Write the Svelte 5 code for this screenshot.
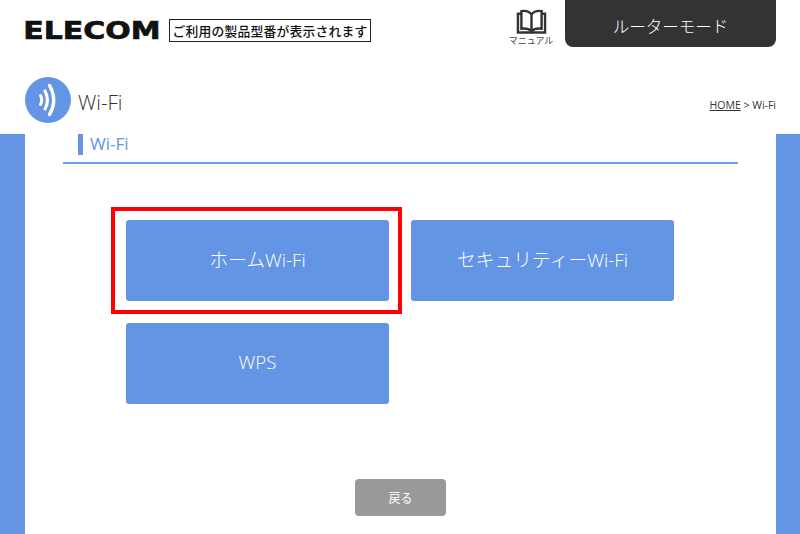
<script lang="ts">
  const menu = ['ホームWi-Fi', 'セキュリティーWi-Fi', 'WPS'];
</script>

<div class="page">
  <header class="top">
    <div class="brand">
      <span class="logo">ELECOM</span>
      <span class="model">ご利用の製品型番が表示されます</span>
    </div>
    <div class="top-right">
      <a class="manual" href="#manual">
        <svg width="31" height="26" viewBox="0 0 31 26" fill="none" stroke="#333" stroke-width="2.5" aria-hidden="true">
          <path d="M15.5 5.5C13 2.5 9 1.5 5 2.2V20.5C9 20 13 20.8 15.5 23C18 20.8 22 20 26 20.5V2.2C22 1.5 18 2.5 15.5 5.5Z" />
          <path d="M15.5 5.5V23" />
          <path d="M5 5H1.4V24.4H29.6V5H26" />
        </svg>
        <span>マニュアル</span>
      </a>
      <div class="mode">ルーターモード</div>
    </div>
  </header>

  <div class="title-row">
    <div class="title">
      <span class="round">
        <svg width="46" height="46" viewBox="0 0 46 46" fill="none" stroke="#fff" stroke-linecap="round" aria-hidden="true">
          <path d="M15.5 18.5C17 21.5 17 25 15.5 27.5" stroke-width="3" />
          <path d="M20 14C23 20 23 27 20 32" stroke-width="3.2" />
          <path d="M24.5 8.5C30 18 30 28 24.5 37.5" stroke-width="3.4" />
        </svg>
      </span>
      <h1>Wi-Fi</h1>
    </div>
    <div class="crumbs"><a href="#home">HOME</a> &gt; Wi-Fi</div>
  </div>

  <main class="body">
    <div class="panel">
      <h2>Wi-Fi</h2>
      <div class="grid">
        {#each menu as label, i}
          <button class="item">
            {label}
            {#if i === 0}<span class="mark"></span>{/if}
          </button>
        {/each}
      </div>
      <button class="back">戻る</button>
    </div>
  </main>
</div>

<style>
  :global(body) {
    margin: 0;
    background: #fff;
  }

  .page {
    width: 800px;
    height: 534px;
    overflow: hidden;
    display: flex;
    flex-direction: column;
    font-family: "Open Sans", "Noto Sans CJK JP", sans-serif;
    color: #333;
  }

  .top {
    height: 47px;
    display: flex;
    justify-content: space-between;
    padding: 0 24px 0 25px;
  }

  .brand {
    display: flex;
    align-items: flex-start;
    padding-top: 19px;
    gap: 9px;
  }

  .logo {
    display: block;
    width: 135px;
    height: 22px;
    font: 700 25.5px/22px "DejaVu Sans", sans-serif;
    color: #111;
    white-space: nowrap;
    text-indent: -1.5px;
    transform: scaleX(1.175);
    transform-origin: left center;
    -webkit-text-stroke: 0.7px #111;
  }

  .model {
    box-sizing: border-box;
    height: 23px;
    width: 202px;
    border: 1px solid #222;
    font: 500 12.8px/21px "Noto Sans CJK JP", sans-serif;
    color: #111;
    text-align: center;
    white-space: nowrap;
    letter-spacing: 0.2px;
  }

  .top-right {
    display: flex;
    gap: 12px;
  }

  .manual {
    width: 44px;
    padding-top: 9px;
    display: flex;
    flex-direction: column;
    align-items: center;
    gap: 1px;
    font-size: 9px;
    line-height: 12px;
    color: #444;
    text-decoration: none;
    white-space: nowrap;
  }

  .mode {
    width: 211px;
    height: 47px;
    background: #333;
    border-radius: 0 0 8px 8px;
    color: #fff;
    font-size: 16.5px;
    font-weight: 300;
    line-height: 54px;
    text-align: center;
  }

  .title-row {
    height: 87px;
    box-sizing: border-box;
    padding: 30px 24px 0 25px;
    display: flex;
    justify-content: space-between;
  }

  .title {
    display: flex;
    align-items: flex-start;
    gap: 7px;
  }

  .round {
    width: 46px;
    height: 46px;
    border-radius: 50%;
    background: #6495e5;
  }

  h1 {
    margin: 0;
    font-size: 20.5px;
    font-weight: 300;
    line-height: 50px;
  }

  .crumbs {
    font-size: 10.5px;
    line-height: 14px;
    padding-top: 21px;
  }

  .crumbs a {
    color: #333;
  }

  .body {
    flex: 1;
    background: #6495e5;
    padding: 0 24px 0 25px;
    display: flex;
  }

  .panel {
    flex: 1;
    background: #fff;
    display: flex;
    flex-direction: column;
    align-items: center;
  }

  h2 {
    box-sizing: border-box;
    align-self: flex-start;
    width: 675px;
    height: 30px;
    margin: 0 0 0 38px;
    padding-left: 27px;
    border-bottom: 2px solid #6f9ce8;
    color: #6495e5;
    font-size: 17px;
    font-weight: 400;
    line-height: 20px;
    position: relative;
  }

  h2::before {
    content: "";
    position: absolute;
    left: 15px;
    top: 0;
    width: 5px;
    height: 21px;
    background: #6495e5;
  }

  .grid {
    margin-top: 56px;
    align-self: flex-start;
    margin-left: 101px;
    display: grid;
    grid-template-columns: 263px 263px;
    grid-auto-rows: 81px;
    gap: 22px;
  }

  .item {
    position: relative;
    border: 0;
    padding: 0 0 3px;
    border-radius: 3px;
    background: #6495e5;
    color: #fff;
    font-family: inherit;
    font-size: 18.8px;
    font-weight: 300;
  }

  .mark {
    position: absolute;
    left: -15px;
    top: -13px;
    width: 291px;
    height: 107px;
    box-sizing: border-box;
    border: 4px solid #f00;
  }

  .back {
    margin-top: 75px;
    width: 91px;
    height: 37px;
    border: 0;
    border-radius: 4px;
    background: #999;
    color: #fff;
    font-family: inherit;
    font-size: 12px;
  }
</style>
